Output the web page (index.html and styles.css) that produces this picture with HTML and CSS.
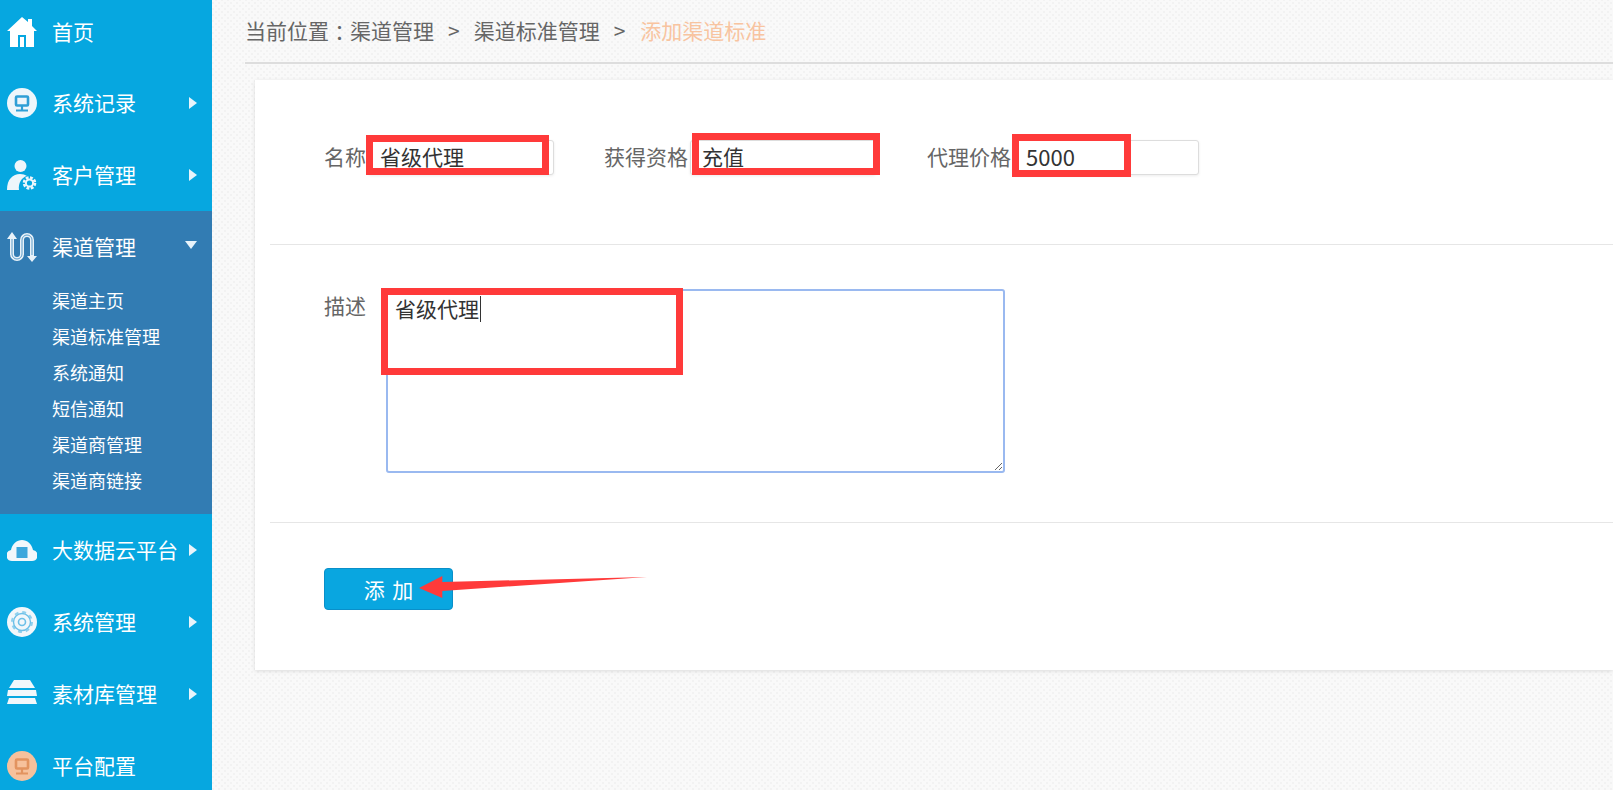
FILE: index.html
```html
<!DOCTYPE html>
<html lang="zh-CN">

<head>
	<meta charset="UTF-8">
	<title>添加渠道标准</title>
	<link rel="stylesheet" href="styles.css">
</head>

<body>

	<ul class="side-nav">
		<li class="nav-item nav-item-home">
			<svg class="nav-icon" viewBox="0 0 30 30"><path fill="#fff" d="M15 0l6 5V2h4v7l5 5h-3v16h-8V18h-8v12H3V14H0z"/><path fill="#fff" d="M13 20h4v10h-4z"/></svg>
			<span class="nav-name">首页</span>
		</li>
		<li class="nav-item">
			<svg class="nav-icon" viewBox="0 0 30 30"><circle cx="15" cy="15" r="15" fill="#eef6fb"/><rect x="9" y="8.500" width="12" height="9" rx="1" fill="none" stroke="#2f9fd6" stroke-width="2.600"/><path fill="none" stroke="#2f9fd6" stroke-width="2.200" d="M15 18v4M9 22.500h12"/></svg>
			<span class="nav-name">系统记录</span>
			<i class="nav-arrow"></i>
		</li>
		<li class="nav-item">
			<svg class="nav-icon" viewBox="0 0 30 30"><circle cx="13.500" cy="6" r="6" fill="#eef6fb"/><path fill="#eef6fb" d="M0 30c0-11 6-16 13-16 3 0 5 .7 7 2-5 1-9 7-8 14z"/><circle cx="22.500" cy="23" r="5.500" fill="none" stroke="#eef6fb" stroke-width="2.600" stroke-dasharray="2.800 1.500"/><circle cx="22.500" cy="23" r="3.600" fill="none" stroke="#eef6fb" stroke-width="2"/></svg>
			<span class="nav-name">客户管理</span>
			<i class="nav-arrow"></i>
		</li>
		<li class="nav-group">
			<div class="nav-item">
				<svg class="nav-icon" viewBox="0 0 30 30"><path fill="none" stroke="#e8f2f9" stroke-width="4" d="M5 5v17a5 5 0 0 0 10 0V8a5 5 0 0 1 10 0v17"/><path fill="none" stroke="#5c9cc8" stroke-width="1" d="M5 7v15a5 5 0 0 0 10 0V8a5 5 0 0 1 10 0v15"/><path fill="#e8f2f9" d="M0 7l5-7 5 7zM20 24h10l-5 6z"/></svg>
				<span class="nav-name">渠道管理</span>
				<i class="nav-arrow-down"></i>
			</div>
			<ul class="sub-nav">
				<li class="sub-item">渠道主页</li>
				<li class="sub-item">渠道标准管理</li>
				<li class="sub-item">系统通知</li>
				<li class="sub-item">短信通知</li>
				<li class="sub-item">渠道商管理</li>
				<li class="sub-item">渠道商链接</li>
			</ul>
		</li>
		<li class="nav-item">
			<svg class="nav-icon" viewBox="0 0 30 30"><path fill="#f1f7fb" d="M5 26a5.500 5.500 0 0 1-1-10.900C5 9 10 5 15 5s10 4 11 10.100A5.500 5.500 0 0 1 25 26z"/><rect x="9.500" y="12" width="11" height="11" fill="#3ba7dc"/></svg>
			<span class="nav-name">大数据云平台</span>
			<i class="nav-arrow"></i>
		</li>
		<li class="nav-item">
			<svg class="nav-icon" viewBox="0 0 30 30"><circle cx="15" cy="15" r="15" fill="#f1f7fb"/><circle cx="15" cy="15" r="10" fill="none" stroke="#8fd0ee" stroke-width="2" stroke-dasharray="3.900 3.950"/><circle cx="15" cy="15" r="8.500" fill="none" stroke="#6cc0e8" stroke-width="1.400"/><circle cx="15" cy="15" r="3.500" fill="none" stroke="#6cc0e8" stroke-width="1.600"/></svg>
			<span class="nav-name">系统管理</span>
			<i class="nav-arrow"></i>
		</li>
		<li class="nav-item">
			<svg class="nav-icon" viewBox="0 0 30 30"><path fill="#f1f7fb" d="M7 1h16l5 8H2zM1 11h28l1 6H0zM2 19h26l2 6H0z"/></svg>
			<span class="nav-name">素材库管理</span>
			<i class="nav-arrow"></i>
		</li>
		<li class="nav-item">
			<svg class="nav-icon" viewBox="0 0 30 30"><circle cx="15" cy="15" r="15" fill="#f6c19c"/><rect x="9" y="8.500" width="12" height="9" rx="1" fill="none" stroke="#e2935f" stroke-width="2.600"/><path fill="none" stroke="#e2935f" stroke-width="2.200" d="M15 18v4M9 22.500h12"/></svg>
			<span class="nav-name">平台配置</span>
		</li>
	</ul>

	<div class="main">
		<div class="crumb">
			<span>当前位置<span class="crumb-colon">：</span>渠道管理</span>
			<span class="crumb-sep">&gt;</span>
			<span>渠道标准管理</span>
			<span class="crumb-sep">&gt;</span>
			<span class="crumb-now">添加渠道标准</span>
		</div>

		<form class="card">
			<div class="card-row card-row-fields">
				<label class="field">
					<span class="field-label">名称</span>
					<input class="field-input" type="text" value="省级代理">
				</label>
				<label class="field">
					<span class="field-label">获得资格</span>
					<input class="field-input" type="text" value="充值">
				</label>
				<label class="field">
					<span class="field-label">代理价格</span>
					<input class="field-input field-input-num" type="text" value="5000">
				</label>
			</div>

			<div class="card-row card-row-desc">
				<span class="field-label">描述</span>
				<textarea class="field-area">省级代理</textarea>
			</div>

			<div class="card-row-submit">
				<button class="btn-add" type="button">添 加</button>
			</div>

			<!-- screenshot annotations -->
			<i class="mark mark-name"></i>
			<i class="mark mark-qualify"></i>
			<i class="mark mark-price"></i>
			<i class="mark mark-desc"></i>
			<i class="caret"></i>
			<svg class="mark-arrow" viewBox="0 0 226 22" preserveAspectRatio="none"><path fill="#ff3a3a" d="M0 12L23 0v6L225 1 23 15v7z"/></svg>
		</form>
	</div>

</body>

</html>
```

FILE: styles.css
```css
* {
	margin: 0;
	padding: 0;
	box-sizing: border-box;
	font-family: 'Noto Sans CJK SC', 'Liberation Sans', sans-serif;
}

html,
body {
	height: 100%;
	overflow: hidden;
}

body {
	display: flex;
	background-color: #f9f9f9;
	background-image: radial-gradient(#f2f2f2 1px, transparent 1.5px), radial-gradient(#f2f2f2 1px, transparent 1.5px);
	background-size: 6px 6px;
	background-position: 0 0, 3px 3px;
}

ul {
	list-style: none;
}

.side-nav {
	flex: none;
	width: 212px;
	height: 100%;
	overflow: hidden;
	background: #06a7e0;
	color: #fff;
}

.nav-item {
	display: flex;
	align-items: center;
	height: 72px;
	padding-left: 7px;
	font-size: 21px;
}

.nav-item-home {
	height: 67px;
	padding-bottom: 3px;
}

.nav-icon {
	flex: none;
	width: 30px;
	height: 30px;
	margin-right: 15px;
}

.nav-name {
	flex: 1;
	margin-top: -3px;
	white-space: nowrap;
}

.nav-arrow {
	width: 0;
	height: 0;
	margin-right: 15px;
	border-left: 8px solid #e8f4fb;
	border-top: 6px solid transparent;
	border-bottom: 6px solid transparent;
}

.nav-arrow-down {
	width: 0;
	height: 0;
	margin: 0 15px 4px 0;
	border-top: 8px solid #e8f4fb;
	border-left: 6px solid transparent;
	border-right: 6px solid transparent;
}

.nav-group {
	height: 303px;
	background: #327cb3;
}

.sub-nav {
	padding-top: 1px;
}

.sub-item {
	height: 36px;
	padding-left: 52px;
	font-size: 18px;
	line-height: 33px;
}

.main {
	flex: 1;
	min-width: 0;
	padding-left: 33px;
}

.crumb {
	display: flex;
	align-items: center;
	height: 64px;
	padding-bottom: 2px;
	border-bottom: 2px solid #dddddd;
	font-size: 21px;
	color: #666;
}

.crumb-colon {
	display: inline-block;
	width: 21px;
	text-align: center;
	font-feature-settings: "palt";
}

.crumb-sep {
	margin: 0 14px;
}

.crumb-now {
	margin-left: 1px;
	color: #f8c4a0;
}

.card {
	position: relative;
	height: 590px;
	margin: 16px 0 0 10px;
	padding-left: 15px;
	background: #fff;
	box-shadow: 0 1px 4px rgba(0, 0, 0, .12);
}

.card-row {
	display: flex;
	padding-left: 54px;
	border-bottom: 1px solid #e6e6e6;
}

.card-row-fields {
	gap: 50px;
	height: 165px;
	padding-top: 60px;
}

.card-row-desc {
	height: 278px;
	padding-top: 44px;
}

.card-row-submit {
	padding: 45px 0 0 54px;
}

.field {
	display: flex;
	align-items: center;
	height: 35px;
}

.field:last-child {
	margin-left: 1px;
}

.field-label {
	font-size: 21px;
	line-height: 33px;
	height: 35px;
	color: #666;
	white-space: nowrap;
}

.field-input {
	width: 186px;
	height: 35px;
	margin-left: 2px;
	padding: 0 0 3px 11px;
	border: 1px solid #ddd;
	border-radius: 3px;
	outline: 0;
	box-shadow: 0 1px 3px rgba(0, 0, 0, .08);
	font-size: 21px;
	color: #333;
}

.field-input-num {
	padding-left: 12px;
	font-size: 22px;
}

.field-area {
	width: 619px;
	height: 184px;
	margin-left: 20px;
	padding: 2px 7px;
	border: 2px solid #9ab9f0;
	border-radius: 3px;
	outline: 0;
	font-size: 21px;
	line-height: 30px;
	color: #333;
}

.btn-add {
	width: 129px;
	height: 42px;
	padding-bottom: 1px;
	border: 1px solid #0a8fc9;
	border-radius: 4px;
	background: #09a6e0;
	font-size: 21px;
	word-spacing: 3px;
	color: #fff;
	cursor: pointer;
}

/* red marks drawn over the form in the screenshot */
.mark {
	position: absolute;
	border: 7px solid #ff3a3a;
}

.mark-name {
	left: 111px;
	top: 55px;
	width: 183px;
	height: 40px;
}

.mark-qualify {
	left: 437px;
	top: 53px;
	width: 188px;
	height: 42px;
}

.mark-price {
	left: 757px;
	top: 54px;
	width: 119px;
	height: 43px;
}

.mark-desc {
	left: 126px;
	top: 208px;
	width: 302px;
	height: 87px;
}

.caret {
	position: absolute;
	left: 225px;
	top: 216px;
	width: 1px;
	height: 26px;
	background: #333;
}

.mark-arrow {
	position: absolute;
	left: 164px;
	top: 496px;
	width: 229px;
	height: 22px;
}
```
